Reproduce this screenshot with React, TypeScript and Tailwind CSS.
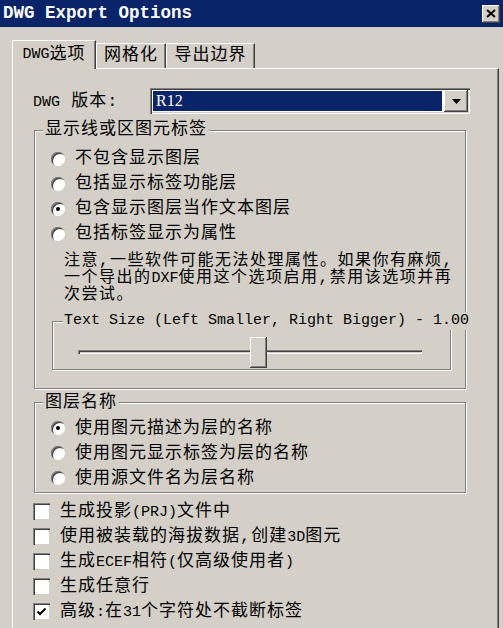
import React from "react";

const mix = "font-['Liberation_Mono','Noto_Sans_CJK_SC',monospace]";

// narrow latin run inside mixed CJK text
function L({ children }: { children: React.ReactNode }) {
  return <span className="text-[15px] tracking-normal">{children}</span>;
}

function Radio({ checked }: { checked?: boolean }) {
  return (
    <span className="w-[14px] h-[14px] rounded-full bg-white shadow-[inset_1px_1px_0_#808080,inset_2px_2px_0_#404040] flex items-center justify-center shrink-0">
      {checked && <span className="w-[4px] h-[4px] rounded-full bg-black" />}
    </span>
  );
}

function Check({ checked }: { checked?: boolean }) {
  return (
    <span className="w-[17px] h-[17px] bg-white shadow-[inset_1px_1px_0_#808080,inset_2px_2px_0_#404040,inset_-1px_-1px_0_#d4d0c8] flex items-center justify-center shrink-0">
      {checked && (
        <svg width="11" height="11" viewBox="0 0 11 11">
          <path d="M1.5 5.5 L4 8 L9.5 2.5" fill="none" stroke="#000" strokeWidth="2" />
        </svg>
      )}
    </span>
  );
}

function RadioRow({ label, checked }: { label: string; checked?: boolean }) {
  return (
    <div className="h-[25px] flex items-center gap-[10px] pl-[16px]">
      <Radio checked={checked} />
      <span className="text-[17px] tracking-[1px] leading-none text-black">{label}</span>
    </div>
  );
}

function CheckRow({ children, checked }: { children: React.ReactNode; checked?: boolean }) {
  return (
    <div className="h-[25px] flex items-center gap-[10px]">
      <Check checked={checked} />
      <span className="text-[17px] tracking-[1px] leading-none text-black">{children}</span>
    </div>
  );
}

export default function App() {
  return (
    <div className={`w-[503px] h-[628px] bg-[#d4d0c8] overflow-hidden ${mix}`}>
      {/* Title bar */}
      <div className="h-[27px] bg-[#0a246a] flex items-center justify-between pl-[3px] pr-[3px]">
        <span className="font-['Liberation_Mono',monospace] font-bold text-[17.5px] text-white leading-none">
          DWG Export Options
        </span>
        <span className="w-[18px] h-[18px] bg-[#d4d0c8] shadow-[inset_-1px_-1px_0_#404040,inset_1px_1px_0_#fff,inset_-2px_-2px_0_#808080] flex items-center justify-center">
          <svg width="10" height="9" viewBox="0 0 10 9">
            <path d="M1 1 L9 8 M9 1 L1 8" stroke="#000" strokeWidth="2" />
          </svg>
        </span>
      </div>

      {/* Tabs */}
      <div className="h-[41px] flex items-end pl-[12px]">
        <div className="relative z-10 -mb-px h-[29px] w-[84px] bg-[#d4d0c8] border-l border-t border-white border-r border-r-[#404040] shadow-[inset_-1px_0_0_#808080] rounded-tl-[2px] flex items-center justify-center text-[17px] tracking-[1px]">
          <L>DWG</L>选项
        </div>
        <div className="h-[25px] w-[70px] border-l border-t border-white border-r border-r-[#404040] shadow-[inset_-1px_0_0_#808080] flex items-center justify-center text-[17px] tracking-[1px]">
          网格化
        </div>
        <div className="h-[25px] w-[89px] border-l border-t border-white border-r border-r-[#404040] shadow-[inset_-1px_0_0_#808080] flex items-center justify-center text-[17px] tracking-[1px]">
          导出边界
        </div>
      </div>

      {/* Panel */}
      <div className="ml-[12px] w-[487px] h-[600px] border-l border-t border-white border-r border-r-[#404040] shadow-[inset_-1px_0_0_#808080] pl-[21px]">
        {/* Version row */}
        <div className="mt-[19px] h-[26px] flex items-center">
          <span className="w-[117px] text-[17px] tracking-[1px] leading-none -ml-[1px]">
            <L>DWG</L> 版本:
          </span>
          <div className="w-[320px] h-[26px] bg-white shadow-[inset_1px_1px_0_#808080,inset_2px_2px_0_#404040,inset_-1px_-1px_0_#fff,inset_-2px_-2px_0_#d4d0c8] flex items-center p-[2px]">
            <div className="flex-1 h-[20px] ml-[1px] bg-[#0a246a] text-white text-[16px] flex items-center pl-[3px] font-['Liberation_Serif',serif]">
              R12
            </div>
            <div className="w-[24px] h-[22px] ml-[2px] bg-[#d4d0c8] shadow-[inset_-1px_-1px_0_#404040,inset_1px_1px_0_#fff,inset_-2px_-2px_0_#808080] flex items-center justify-center">
              <svg width="9" height="5" viewBox="0 0 9 5">
                <path d="M0 0 H9 L4.5 5 Z" fill="#000" />
              </svg>
            </div>
          </div>
        </div>

        {/* Group 1 */}
        <fieldset className="mt-[6px] w-[432px] border border-[#808080] shadow-[inset_1px_1px_0_#fff,1px_1px_0_#fff] pb-[18px]">
          <legend className="ml-[8px] px-[2px] bg-[#d4d0c8] text-[17px] tracking-[1px] leading-[20px]">
            显示线或区图元标签
          </legend>
          <div className="pt-[6px]">
            <RadioRow label="不包含显示图层" />
            <RadioRow label="包括显示标签功能层" />
            <RadioRow label="包含显示图层当作文本图层" checked />
            <RadioRow label="包括标签显示为属性" />
          </div>
          <p className="mt-[7px] ml-[29px] text-[16px] leading-[16.5px] tracking-[1.5px] whitespace-nowrap">
            注意,一些软件可能无法处理属性。如果你有麻烦,
            <br />
            一个导出的<L>DXF</L>使用这个选项启用,禁用该选项并再
            <br />
            次尝试。
          </p>
          <div className="relative mt-[17px] ml-[17px] w-[399px] h-[49px] border border-[#808080] shadow-[inset_1px_1px_0_#fff,1px_1px_0_#fff] pt-[15px]">
            <span className="absolute -top-[10px] left-[10px] px-[1px] bg-[#d4d0c8] whitespace-nowrap font-['Liberation_Mono',monospace] text-[15px] leading-[18px]">
              Text Size (Left Smaller, Right Bigger) - 1.00
            </span>
            <div className="relative ml-[25px] w-[344px] h-[31px] flex items-center">
              <div className="w-full h-[4px] bg-[#d4d0c8] shadow-[inset_1px_1px_0_#808080,inset_2px_2px_0_#404040,inset_-1px_-1px_0_#fff]" />
              <div className="absolute left-[172px] top-0 w-[17px] h-[31px] bg-[#d4d0c8] shadow-[inset_-1px_-1px_0_#404040,inset_1px_1px_0_#fff,inset_-2px_-2px_0_#808080]" />
            </div>
          </div>
        </fieldset>

        {/* Group 2 */}
        <fieldset className="mt-[4px] w-[432px] border border-[#808080] shadow-[inset_1px_1px_0_#fff,1px_1px_0_#fff] pb-[1px]">
          <legend className="ml-[8px] px-[2px] bg-[#d4d0c8] text-[17px] tracking-[1px] leading-[20px]">
            图层名称
          </legend>
          <div className="pt-[3px]">
            <RadioRow label="使用图元描述为层的名称" checked />
            <RadioRow label="使用图元显示标签为层的名称" />
            <RadioRow label="使用源文件名为层名称" />
          </div>
        </fieldset>

        {/* Checkboxes */}
        <div className="mt-[6px] -ml-[1px]">
          <CheckRow>生成投影<L>(PRJ)</L>文件中</CheckRow>
          <CheckRow>使用被装载的海拔数据,创建<L>3D</L>图元</CheckRow>
          <CheckRow>生成<L>ECEF</L>相符<L>(</L>仅高级使用者<L>)</L></CheckRow>
          <CheckRow>生成任意行</CheckRow>
          <CheckRow checked>高级<L>:</L>在<L>31</L>个字符处不截断标签</CheckRow>
        </div>
      </div>
    </div>
  );
}
